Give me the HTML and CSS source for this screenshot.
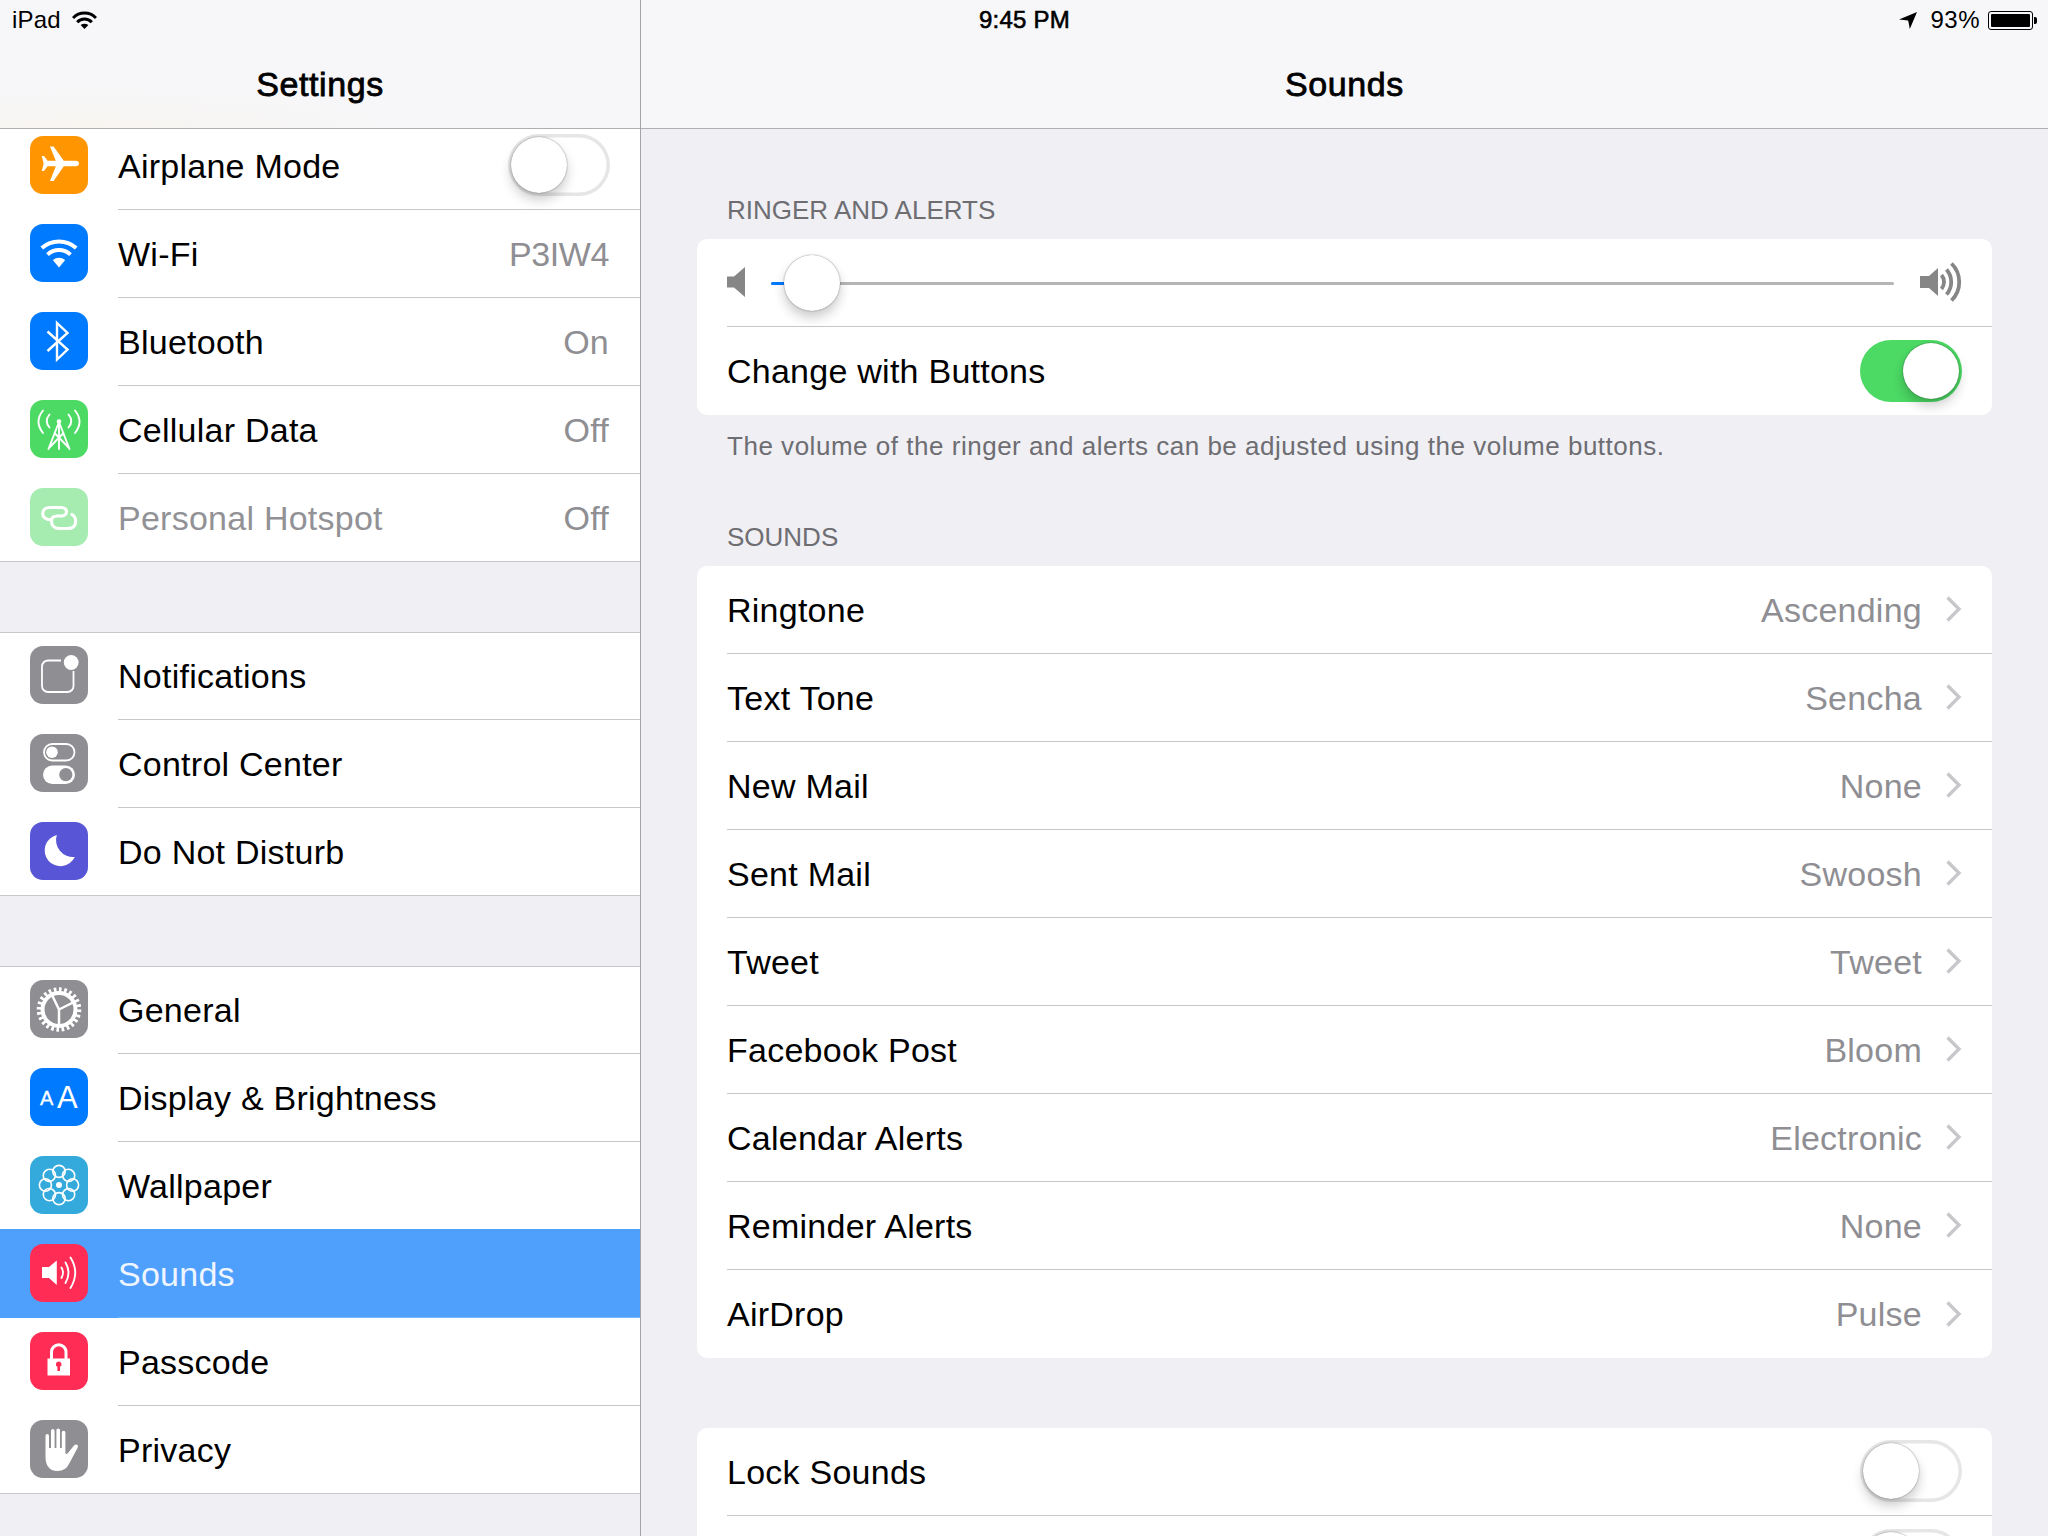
FILE: index.html
```html
<!DOCTYPE html>
<html lang="en">
<head>
<meta charset="utf-8">
<title>Settings - Sounds</title>
<link rel="stylesheet" href="styles.css">
</head>
<body>
<svg class="defs" width="0" height="0" aria-hidden="true">
  <symbol id="chev" viewBox="0 0 16 26"><path d="M1.5 1.5 L13 13 L1.5 24.5" fill="none" stroke="currentColor" stroke-width="3.4"/></symbol>
</svg>
<div class="statusbar">
  <div class="status-left">
    <span>iPad</span>
    <svg class="status-wifi" viewBox="0 0 25 18"><path d="M1 7 A16 16 0 0 1 24 7 M5.2 11.2 A10 10 0 0 1 19.8 11.2" fill="none" stroke="currentColor" stroke-width="3"/><path d="M8.6 14 Q12.5 11.4 16.4 14 L12.5 18Z" fill="currentColor"/></svg>
  </div>
  <div class="status-time">9:45 PM</div>
  <div class="status-right">
    <svg class="status-arrow" viewBox="0 0 18 17"><path d="M0 7.6 L18 0 L10.8 17 L9.2 8.6Z" fill="currentColor"/></svg>
    <span class="status-pct">93%</span>
    <div class="battery"><div class="battery-fill"></div></div>
    <div class="battery-tip"></div>
  </div>
</div>

<div class="app">
  <aside class="sidebar">
    <header class="navbar navbar-master"><h1 class="nav-title">Settings</h1></header>
    <div class="list">
      <section class="section">
        <div class="row">
          <svg class="icon orange" viewBox="0 0 58 58"><path d="M45.5 24.8 H33.8 L23.6 10.6 H20 L25.8 24.8 H17.6 L14 20 H11.8 L13.6 27.5 L11.8 35 H14 L17.6 30.2 H25.8 L20 45 H23.6 L33.8 30.2 H45.5 Q49 30 49 27.5 Q49 25 45.5 24.8Z" fill="#fff"/></svg>
          <div class="row-body"><span class="label">Airplane Mode</span><div class="toggle toggle-side"><div class="knob"></div></div></div>
        </div>
        <div class="row">
          <svg class="icon blue" viewBox="0 0 58 58"><g fill="none" stroke="#fff" stroke-width="4"><path d="M11.8 24 A26 26 0 0 1 46.2 24"/><path d="M17.5 30.6 A17 17 0 0 1 40.5 30.6"/></g><path d="M22.8 36 Q29 31.5 35.2 36 L29 43.5Z" fill="#fff"/></svg>
          <div class="row-body"><span class="label">Wi-Fi</span><span class="value value-tight">P3IW4</span></div>
        </div>
        <div class="row">
          <svg class="icon blue" viewBox="0 0 58 58"><path d="M17.5 19.5 L37.5 37.5 L27 47.5 V11 L37.5 21 L17.5 39" fill="none" stroke="#fff" stroke-width="2.4"/></svg>
          <div class="row-body"><span class="label">Bluetooth</span><span class="value">On</span></div>
        </div>
        <div class="row">
          <svg class="icon green" viewBox="0 0 58 58"><g fill="none" stroke="#fff" stroke-width="1.9" stroke-linecap="round"><path d="M13 10.5 Q4 21.5 13 33"/><path d="M19.5 14.5 Q14 21 19.5 27.5"/><path d="M45 10.5 Q54 21.5 45 33"/><path d="M38.5 14.5 Q44 21 38.5 27.5"/><path d="M29 22 V49 M29 22 L18.5 49 M29 22 L39.5 49 M24.5 33 L39 48 M33.5 33 L19 48"/></g><circle cx="29" cy="21.5" r="2.3" fill="#fff"/></svg>
          <div class="row-body"><span class="label">Cellular Data</span><span class="value">Off</span></div>
        </div>
        <div class="row">
          <svg class="icon green-soft" viewBox="0 0 58 58"><path d="M21.5 32 C15 31.5 12.7 28.5 12.7 25.5 C12.7 21.5 16 19.5 20 19.5 H31 C34.5 19.5 36.5 21.5 36.5 24 C36.5 26.5 34 28 31 28 H27 C23.5 28 21.5 30 21.5 33 C21.5 37.5 24.5 40.5 29 40.5 H38 C42.5 40.5 45.7 38 45.7 33.5 C45.7 30.5 44.5 28 42 26.5" fill="none" stroke="#fff" stroke-width="3.2" stroke-linecap="round"/></svg>
          <div class="row-body"><span class="label label-muted">Personal Hotspot</span><span class="value">Off</span></div>
        </div>
      </section>

      <section class="section">
        <div class="row">
          <svg class="icon gray" viewBox="0 0 58 58"><path d="M31 14.5 H18 A6 6 0 0 0 12 20.5 V40 A6 6 0 0 0 18 46 H37.5 A6 6 0 0 0 43.5 40 V25" fill="none" stroke="#fff" stroke-width="1.8"/><circle cx="41.2" cy="16.5" r="7.4" fill="#fff"/></svg>
          <div class="row-body"><span class="label">Notifications</span></div>
        </div>
        <div class="row">
          <svg class="icon gray" viewBox="0 0 58 58"><rect x="14" y="10" width="30.5" height="16.5" rx="8.2" fill="none" stroke="#fff" stroke-width="1.8"/><circle cx="22" cy="18.2" r="5.8" fill="#fff"/><rect x="13" y="31.5" width="32" height="18.5" rx="9.2" fill="#fff"/><circle cx="35.8" cy="40.7" r="6.6" fill="#8e8e93"/></svg>
          <div class="row-body"><span class="label">Control Center</span></div>
        </div>
        <div class="row">
          <svg class="icon indigo" viewBox="0 0 58 58"><path d="M26.8 13 A15.8 15.8 0 1 0 44.8 35 A17 17 0 0 1 26.8 13Z" fill="#fff"/></svg>
          <div class="row-body"><span class="label">Do Not Disturb</span></div>
        </div>
      </section>

      <section class="section">
        <div class="row">
          <svg class="icon gray" viewBox="0 0 58 58"><g fill="none" stroke="#fff"><circle cx="29" cy="29.5" r="20" stroke-width="4.6" pathLength="48" stroke-dasharray="1 1"/><circle cx="29" cy="29.5" r="16.5" stroke-width="4"/><path d="M29 29.5 V47 M29 29.5 L45 21.5 M29 29.5 L21.5 14" stroke-width="2.5"/></g></svg>
          <div class="row-body"><span class="label">General</span></div>
        </div>
        <div class="row">
          <svg class="icon blue" viewBox="0 0 58 58"><text class="aa-small" x="10" y="37.2">A</text><text class="aa-big" x="27" y="39.6">A</text></svg>
          <div class="row-body"><span class="label">Display &amp; Brightness</span></div>
        </div>
        <div class="row">
          <svg class="icon teal" viewBox="0 0 58 58"><g fill="none" stroke="#fff" stroke-width="1.6"><ellipse cx="29" cy="15.4" rx="6.2" ry="6"/><ellipse cx="29" cy="15.4" rx="6.2" ry="6" transform="rotate(45 29 29)"/><ellipse cx="29" cy="15.4" rx="6.2" ry="6" transform="rotate(90 29 29)"/><ellipse cx="29" cy="15.4" rx="6.2" ry="6" transform="rotate(135 29 29)"/><ellipse cx="29" cy="15.4" rx="6.2" ry="6" transform="rotate(180 29 29)"/><ellipse cx="29" cy="15.4" rx="6.2" ry="6" transform="rotate(225 29 29)"/><ellipse cx="29" cy="15.4" rx="6.2" ry="6" transform="rotate(270 29 29)"/><ellipse cx="29" cy="15.4" rx="6.2" ry="6" transform="rotate(315 29 29)"/></g><circle cx="29" cy="29" r="3" fill="#fff"/></svg>
          <div class="row-body"><span class="label">Wallpaper</span></div>
        </div>
        <div class="row row-selected">
          <svg class="icon red" viewBox="0 0 58 58"><path d="M12 23 H19 L26.8 16.5 V41 L19 34 H12Z" fill="#fff"/><g fill="none" stroke="#fff" stroke-width="1.9" stroke-linecap="round"><path d="M31.5 23.5 Q34.5 28.5 31.5 34"/><path d="M35.5 18.5 Q41.5 28.5 35.5 39"/><path d="M40.5 13.5 Q50 28.5 40.5 44"/></g></svg>
          <div class="row-body"><span class="label">Sounds</span></div>
        </div>
        <div class="row">
          <svg class="icon red" viewBox="0 0 58 58"><path d="M21.5 27 V20 A7 7 0 0 1 36 20 V27" fill="none" stroke="#fff" stroke-width="3"/><path fill-rule="evenodd" d="M17.5 26.5 H40 V43.5 H17.5Z M28.7 29.5 A2.8 2.8 0 0 0 27.4 34.8 V39 H30 V34.8 A2.8 2.8 0 0 0 28.7 29.5Z" fill="#fff"/></svg>
          <div class="row-body"><span class="label">Passcode</span></div>
        </div>
        <div class="row">
          <svg class="icon gray" viewBox="0 0 58 58"><path d="M15.5 16 Q15.5 14 17.2 14 Q19 14 19 16 V28 H21 V11 Q21 9 22.8 9 Q24.6 9 24.6 11 V28 H26.4 V10 Q26.4 8.4 28.2 8.4 Q30 8.4 30 10 V28 H31.8 V12.5 Q31.8 10.8 33.6 10.8 Q35.4 10.8 35.4 12.5 V33 Q36 35 38 33 L44 25.5 Q46 24 47.5 25 Q48.5 26 47.5 28 L39.5 43 Q36 51 27.5 51 Q21 51 18 46.5 Q15.5 43 15.5 37Z" fill="#fff"/></svg>
          <div class="row-body"><span class="label">Privacy</span></div>
        </div>
      </section>
    </div>
  </aside>

  <main class="detail">
    <header class="navbar"><h2 class="nav-title">Sounds</h2></header>
    <div class="detail-body">
      <h3 class="group-title group-title-first">RINGER AND ALERTS</h3>
      <div class="panel">
        <div class="prow">
          <div class="prow-body slider-row">
            <svg class="spk-low" viewBox="0 0 18 30"><path d="M0 9.5 H7 L18 0 V30 L7 20.5 H0Z" fill="currentColor"/></svg>
            <div class="track"><div class="track-fill"></div><div class="knob slider-knob"></div></div>
            <svg class="spk-high" viewBox="0 0 42 40"><path d="M0 14 H9 L18 6 V34 L9 26 H0Z" fill="currentColor"/><g fill="none" stroke="currentColor" stroke-width="3.8"><path d="M21.5 13 A11 11 0 0 1 21.5 27"/><path d="M26.5 7.5 A19 19 0 0 1 26.5 32.5"/><path d="M31.5 1.5 A26 26 0 0 1 31.5 38.5"/></g></svg>
          </div>
        </div>
        <div class="prow">
          <div class="prow-body prow-last"><span class="label">Change with Buttons</span><div class="toggle toggle-on"><div class="knob"></div></div></div>
        </div>
      </div>
      <p class="group-note">The volume of the ringer and alerts can be adjusted using the volume buttons.</p>

      <h3 class="group-title">SOUNDS</h3>
      <div class="panel">
        <div class="prow"><div class="prow-body"><span class="label">Ringtone</span><span class="pvalue">Ascending</span><svg class="chev"><use href="#chev"/></svg></div></div>
        <div class="prow"><div class="prow-body"><span class="label">Text Tone</span><span class="pvalue">Sencha</span><svg class="chev"><use href="#chev"/></svg></div></div>
        <div class="prow"><div class="prow-body"><span class="label">New Mail</span><span class="pvalue">None</span><svg class="chev"><use href="#chev"/></svg></div></div>
        <div class="prow"><div class="prow-body"><span class="label">Sent Mail</span><span class="pvalue">Swoosh</span><svg class="chev"><use href="#chev"/></svg></div></div>
        <div class="prow"><div class="prow-body"><span class="label">Tweet</span><span class="pvalue">Tweet</span><svg class="chev"><use href="#chev"/></svg></div></div>
        <div class="prow"><div class="prow-body"><span class="label">Facebook Post</span><span class="pvalue">Bloom</span><svg class="chev"><use href="#chev"/></svg></div></div>
        <div class="prow"><div class="prow-body"><span class="label">Calendar Alerts</span><span class="pvalue">Electronic</span><svg class="chev"><use href="#chev"/></svg></div></div>
        <div class="prow"><div class="prow-body"><span class="label">Reminder Alerts</span><span class="pvalue">None</span><svg class="chev"><use href="#chev"/></svg></div></div>
        <div class="prow"><div class="prow-body prow-last"><span class="label">AirDrop</span><span class="pvalue">Pulse</span><svg class="chev"><use href="#chev"/></svg></div></div>
      </div>

      <div class="panel panel-spaced">
        <div class="prow"><div class="prow-body"><span class="label">Lock Sounds</span><div class="toggle"><div class="knob"></div></div></div></div>
        <div class="prow"><div class="prow-body prow-last prow-end"><div class="toggle"><div class="knob"></div></div></div></div>
      </div>
    </div>
  </main>
</div>
</body>
</html>
```

FILE: styles.css
```css
* { box-sizing: border-box; }
html, body { margin: 0; padding: 0; }
body {
  width: 2048px;
  height: 1536px;
  overflow: hidden;
  position: relative;
  background: #efeff4;
  color: #000;
  font-family: "Liberation Sans", Arial, sans-serif;
  font-size: 34px;
}
.defs { position: absolute; }

/* status bar lies over the nav bars */
.statusbar {
  position: absolute;
  top: 0;
  left: 0;
  width: 2048px;
  height: 40px;
  padding: 0 11px 0 12px;
  display: grid;
  grid-template-columns: 1fr auto 1fr;
  align-items: center;
  font-size: 24px;
  z-index: 2;
}
.status-left { display: flex; align-items: center; gap: 11px; }
.status-left span { letter-spacing: 0.2px; }
.status-wifi { width: 25px; height: 18px; }
.status-time { font-weight: 400; -webkit-text-stroke: 0.6px #000; letter-spacing: 0.25px; }
.status-right { display: flex; align-items: center; justify-content: flex-end; }
.status-arrow { width: 18px; height: 17px; margin-right: 13px; }
.status-pct { letter-spacing: 0.5px; }
.battery {
  width: 45px;
  height: 19px;
  margin-left: 8px;
  padding: 2px;
  border: 1px solid #000;
  border-radius: 3px;
}
.battery-fill { width: 39px; height: 100%; background: #000; border-radius: 1px; }
.battery-tip { width: 3px; height: 7px; margin-left: 1px; background: #000; border-radius: 0 2px 2px 0; }

.app { display: flex; height: 1536px; }
.sidebar { width: 641px; flex: none; border-right: 1px solid #a4a4a9; overflow: hidden; }
.detail { flex: 1; min-width: 0; overflow: hidden; }

.navbar {
  position: relative;
  z-index: 1;
  height: 129px;
  padding-top: 40px;
  display: flex;
  align-items: center;
  justify-content: center;
  background: #f7f7f9;
  border-bottom: 1px solid #aeaeb3;
}
.navbar-master {
  background: radial-gradient(ellipse 320px 40px at 90px 128px, #f8f5f1, #f7f7f9);
}
.nav-title {
  margin: 0;
  font-size: 34px;
  font-weight: 400;
  letter-spacing: 0.6px;
  -webkit-text-stroke: 0.8px #000;
}

/* master list */
.list { margin-top: -7px; }
.section {
  background: #fff;
  margin-bottom: 70px;
  box-shadow: inset 0 1px #c8c7cc;
}
.row {
  height: 88px;
  padding: 14px 0 0 30px;
  display: flex;
  align-items: flex-start;
}
.icon { width: 58px; height: 58px; flex: none; border-radius: 13px; }
.orange { background: #ff9500; }
.blue { background: #007aff; }
.green { background: #4cd964; }
.green-soft { background: #a6ecb1; }
.gray { background: #8e8e93; }
.indigo { background: #5856d6; }
.teal { background: #34aadc; }
.red { background: #ff2d55; }
.aa-small { font-size: 20px; fill: #fff; stroke: #fff; stroke-width: 0.3px; }
.aa-big { font-size: 31px; fill: #fff; }

.row-body {
  flex: 1;
  min-width: 0;
  height: 88px;
  margin: -14px 0 0 30px;
  padding: 0 31px 1px 0;
  border-bottom: 1px solid #c8c7cc;
  display: flex;
  align-items: center;
  justify-content: space-between;
}
.section .row:last-child .row-body { border-bottom: 0; }
.section .row:last-child { box-shadow: inset 0 -1px #c8c7cc; }
.label { letter-spacing: 0.25px; padding-top: 2px; }
.label-muted { color: #929296; }
.value { color: #8e8e93; letter-spacing: 0.25px; padding-top: 2px; }
.value-tight { letter-spacing: -0.4px; }

.row-selected { background: #4fa0fd; box-shadow: 0 -1px #4fa0fd; position: relative; }
.row-selected .label { color: #eef5ff; }
.row-selected .row-body { border-bottom-color: #7ab8fd; }

/* toggles */
.toggle {
  width: 102px;
  height: 62px;
  flex: none;
  padding: 3px 0 0 3px;
  border-radius: 31px;
  box-shadow: inset 0 0 0 3.5px #e6e6e6;
}
.knob {
  width: 56px;
  height: 56px;
  border-radius: 50%;
  background: #fff;
  box-shadow: 0 0 1.5px rgba(0, 0, 0, 0.55), 0 7px 12px rgba(0, 0, 0, 0.2);
}
.toggle-side { margin-right: -1px; }
.toggle-on {
  padding: 3px 3px 0 0;
  display: flex;
  justify-content: flex-end;
  background: #4cd964;
  box-shadow: none;
}

/* detail pane */
.detail-body { padding: 0 56px; }
.group-title {
  margin: 62px 0 14px;
  height: 30px;
  line-height: 30px;
  padding-left: 30px;
  font-size: 26px;
  font-weight: 400;
  color: #6d6d72;
}
.group-title-first { margin-top: 66px; }
.group-note {
  margin: 16px 0 -1px;
  height: 30px;
  line-height: 30px;
  padding-left: 30px;
  font-size: 26px;
  letter-spacing: 0.52px;
  color: #6d6d72;
}
.panel { background: #fff; border-radius: 10px; overflow: hidden; }
.panel-spaced { margin-top: 70px; }
.prow { height: 88px; padding-left: 30px; }
.prow-body {
  height: 88px;
  padding: 0 30px 1px 0;
  border-bottom: 1px solid #c8c7cc;
  display: flex;
  align-items: center;
}
.prow-last { border-bottom: 0; }
.prow-end { justify-content: flex-end; }
.prow-body .label { flex: 1; }
.pvalue { color: #8e8e93; letter-spacing: 0.25px; padding-top: 2px; }
.chev { width: 16px; height: 26px; margin-left: 24px; color: #c7c7cc; flex: none; }

.slider-row { gap: 26px; }
.spk-low { width: 18px; height: 30px; flex: none; color: #868686; }
.spk-high { width: 42px; height: 40px; flex: none; color: #868686; }
.track { flex: 1; height: 3px; margin-top: 3px; background: #b5b5b5; border-radius: 2px; position: relative; }
.track-fill { width: 16px; height: 3px; background: #007aff; border-radius: 2px 0 0 2px; }
.slider-knob { position: absolute; left: 13px; top: -27px; }
```
